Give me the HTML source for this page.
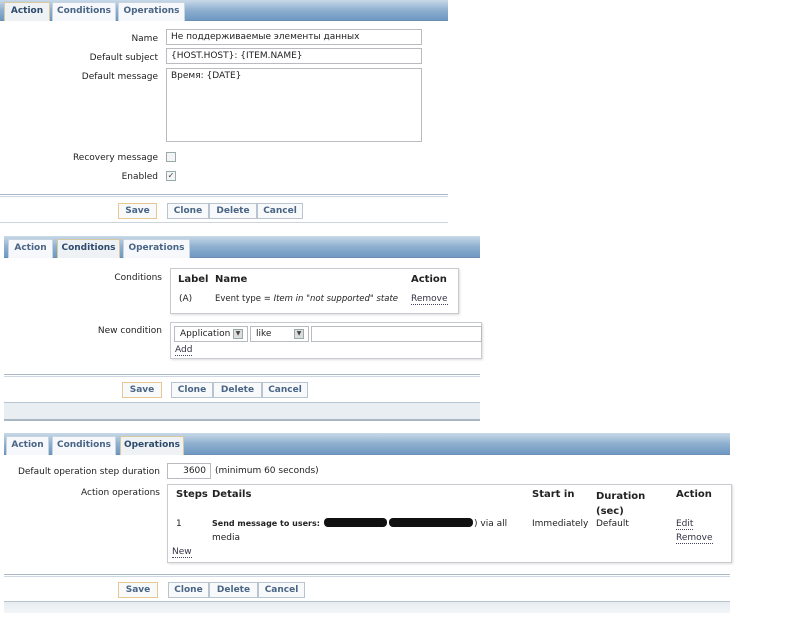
<!DOCTYPE html>
<html><head><meta charset="utf-8"><style>
*{box-sizing:border-box;margin:0;padding:0}
body{width:800px;height:637px;background:#fff;position:relative;overflow:hidden;font-family:"DejaVu Sans","Liberation Sans",sans-serif;font-size:9px;color:#222}
.a{position:absolute}
.bar{position:absolute;height:21px;background:linear-gradient(#c9d9e8,#8fb0d0 50%,#6f98c2);border-bottom:1px solid #6b8fb4}
.tab{position:absolute;top:2px;height:19px;background:#f6f8fb;border:1px solid #c8d4e0;border-bottom:none;color:#4a6586;font-weight:bold;font-size:9px;text-align:center;line-height:17px}
.tab.on{background:#eef2f5;color:#2d4a6b;border-color:#d8c9a0}
.lbl{position:absolute;text-align:right;white-space:nowrap}
.in{position:absolute;border:1px solid #b8bcc0;background:#fff;padding:2px 4px;white-space:nowrap;overflow:hidden}
.cb{position:absolute;width:10px;height:10px;border:1px solid #9aa;background:#f4f4f4;font-size:8px;line-height:8px;text-align:center;color:#444}
.hl{position:absolute;height:3px;border-top:1px solid #a9b8c8;border-bottom:1px solid #cfd8e2}
.btn{position:absolute;height:16px;border:1px solid #b8c4d0;background:#f7f9fb;color:#4a6586;font-weight:bold;text-align:center;line-height:14px}
.btn.s{border-color:#e8c890}
.box{position:absolute;border:1px solid #c8ccd0;background:#fff;box-shadow:1px 1px 2px #ddd}
b{font-weight:bold}
u{text-decoration:none;border-bottom:1px dotted #446;color:#334}
</style></head><body>
<!-- Panel 1 -->
<div class="bar" style="left:0;top:0;width:448px"></div>
<div class="tab on" style="left:4px;width:46px">Action</div>
<div class="tab" style="left:52px;width:64px">Conditions</div>
<div class="tab" style="left:118px;width:67px">Operations</div>
<div class="lbl" style="right:642px;top:34px">Name</div>
<div class="in" style="left:166px;top:29px;width:256px;height:16px">Не поддерживаемые элементы данных</div>
<div class="lbl" style="right:642px;top:53px">Default subject</div>
<div class="in" style="left:166px;top:48px;width:256px;height:16px">{HOST.HOST}: {ITEM.NAME}</div>
<div class="lbl" style="right:642px;top:72px">Default message</div>
<div class="in" style="left:166px;top:68px;width:256px;height:74px">Время: {DATE}</div>
<div class="lbl" style="right:642px;top:153px">Recovery message</div>
<div class="cb" style="left:166px;top:152px"></div>
<div class="lbl" style="right:642px;top:172px">Enabled</div>
<div class="cb" style="left:166px;top:171px">✓</div>
<div class="hl" style="left:0;top:194px;width:448px"></div>
<div class="btn s" style="left:118px;top:203px;width:39px">Save</div>
<div class="btn" style="left:167px;top:203px;width:42px">Clone</div>
<div class="btn" style="left:209px;top:203px;width:48px">Delete</div>
<div class="btn" style="left:257px;top:203px;width:46px">Cancel</div>
<div class="a" style="left:0;top:222px;width:448px;height:1px;background:#ccd5de"></div>

<!-- Panel 2 -->
<div class="bar" style="left:4px;top:236px;width:476px;height:22px"></div>
<div class="tab" style="left:8px;top:239px;width:45px">Action</div>
<div class="tab on" style="left:57px;top:239px;width:63px">Conditions</div>
<div class="tab" style="left:123px;top:239px;width:67px">Operations</div>
<div class="lbl" style="right:638px;top:273px">Conditions</div>
<div class="box" style="left:170px;top:268px;width:289px;height:46px"></div>
<div class="a" style="left:178px;top:274px;font-size:10px;font-weight:bold">Label</div>
<div class="a" style="left:215px;top:274px;font-size:10px;font-weight:bold">Name</div>
<div class="a" style="left:411px;top:274px;font-size:10px;font-weight:bold">Action</div>
<div class="a" style="left:179px;top:294px">(A)</div>
<div class="a" style="left:215px;top:294px;font-size:8.5px">Event type = <i>Item in "not supported" state</i></div>
<div class="a" style="left:411px;top:294px"><u>Remove</u></div>
<div class="lbl" style="right:638px;top:326px">New condition</div>
<div class="box" style="left:170px;top:322px;width:312px;height:37px"></div>
<div class="in" style="left:174px;top:326px;width:74px;height:16px;padding:2px 5px">Application</div>
<div class="cb" style="left:233px;top:329px;background:#ddd;font-size:6px">▼</div>
<div class="in" style="left:250px;top:326px;width:59px;height:16px;padding:2px 5px">like</div>
<div class="cb" style="left:294px;top:329px;background:#ddd;font-size:6px">▼</div>
<div class="in" style="left:311px;top:326px;width:171px;height:16px"></div>
<div class="a" style="left:175px;top:345px"><u>Add</u></div>
<div class="hl" style="left:4px;top:374px;width:476px"></div>
<div class="btn s" style="left:122px;top:382px;width:40px">Save</div>
<div class="btn" style="left:171px;top:382px;width:42px">Clone</div>
<div class="btn" style="left:213px;top:382px;width:49px">Delete</div>
<div class="btn" style="left:262px;top:382px;width:46px">Cancel</div>
<div class="a" style="left:4px;top:402px;width:476px;height:19px;background:#e9eef3;border-top:1px solid #b8c4d0;border-bottom:2px solid #a9b6c4"></div>

<!-- Panel 3 -->
<div class="bar" style="left:4px;top:433px;width:726px;height:22px"></div>
<div class="tab" style="left:6px;top:436px;width:43px">Action</div>
<div class="tab" style="left:52px;top:436px;width:64px">Conditions</div>
<div class="tab on" style="left:120px;top:436px;width:64px">Operations</div>
<div class="lbl" style="right:640px;top:467px">Default operation step duration</div>
<div class="in" style="left:167px;top:463px;width:44px;height:16px;text-align:right">3600</div>
<div class="a" style="left:215px;top:466px">(minimum 60 seconds)</div>
<div class="lbl" style="right:640px;top:488px">Action operations</div>
<div class="box" style="left:167px;top:484px;width:565px;height:79px"></div>
<div class="a" style="left:176px;top:489px;font-size:10px;font-weight:bold">Steps</div>
<div class="a" style="left:212px;top:489px;font-size:10px;font-weight:bold">Details</div>
<div class="a" style="left:532px;top:489px;font-size:10px;font-weight:bold">Start in</div>
<div class="a" style="left:596px;top:489px;font-size:10px;font-weight:bold;line-height:15px">Duration<br>(sec)</div>
<div class="a" style="left:676px;top:489px;font-size:10px;font-weight:bold">Action</div>
<div class="a" style="left:176px;top:519px">1</div>
<div class="a" style="left:212px;top:519px;font-size:8px"><b>Send message to users:</b></div>
<div class="a" style="left:324px;top:518px;width:63px;height:9px;background:#111;border-radius:4px"></div>
<div class="a" style="left:389px;top:518px;width:84px;height:9px;background:#111;border-radius:4px"></div>
<div class="a" style="left:474px;top:519px">) via all</div>
<div class="a" style="left:212px;top:533px">media</div>
<div class="a" style="left:532px;top:519px">Immediately</div>
<div class="a" style="left:596px;top:519px">Default</div>
<div class="a" style="left:676px;top:519px"><u>Edit</u></div>
<div class="a" style="left:676px;top:533px"><u>Remove</u></div>
<div class="a" style="left:172px;top:547px"><u>New</u></div>
<div class="hl" style="left:4px;top:574px;width:726px"></div>
<div class="btn s" style="left:118px;top:582px;width:40px">Save</div>
<div class="btn" style="left:168px;top:582px;width:41px">Clone</div>
<div class="btn" style="left:209px;top:582px;width:49px">Delete</div>
<div class="btn" style="left:258px;top:582px;width:47px">Cancel</div>
<div class="a" style="left:4px;top:601px;width:726px;height:12px;background:linear-gradient(#e6ebf0,#f4f6f8);border-top:1px solid #b8c4d0"></div>
</body></html>
